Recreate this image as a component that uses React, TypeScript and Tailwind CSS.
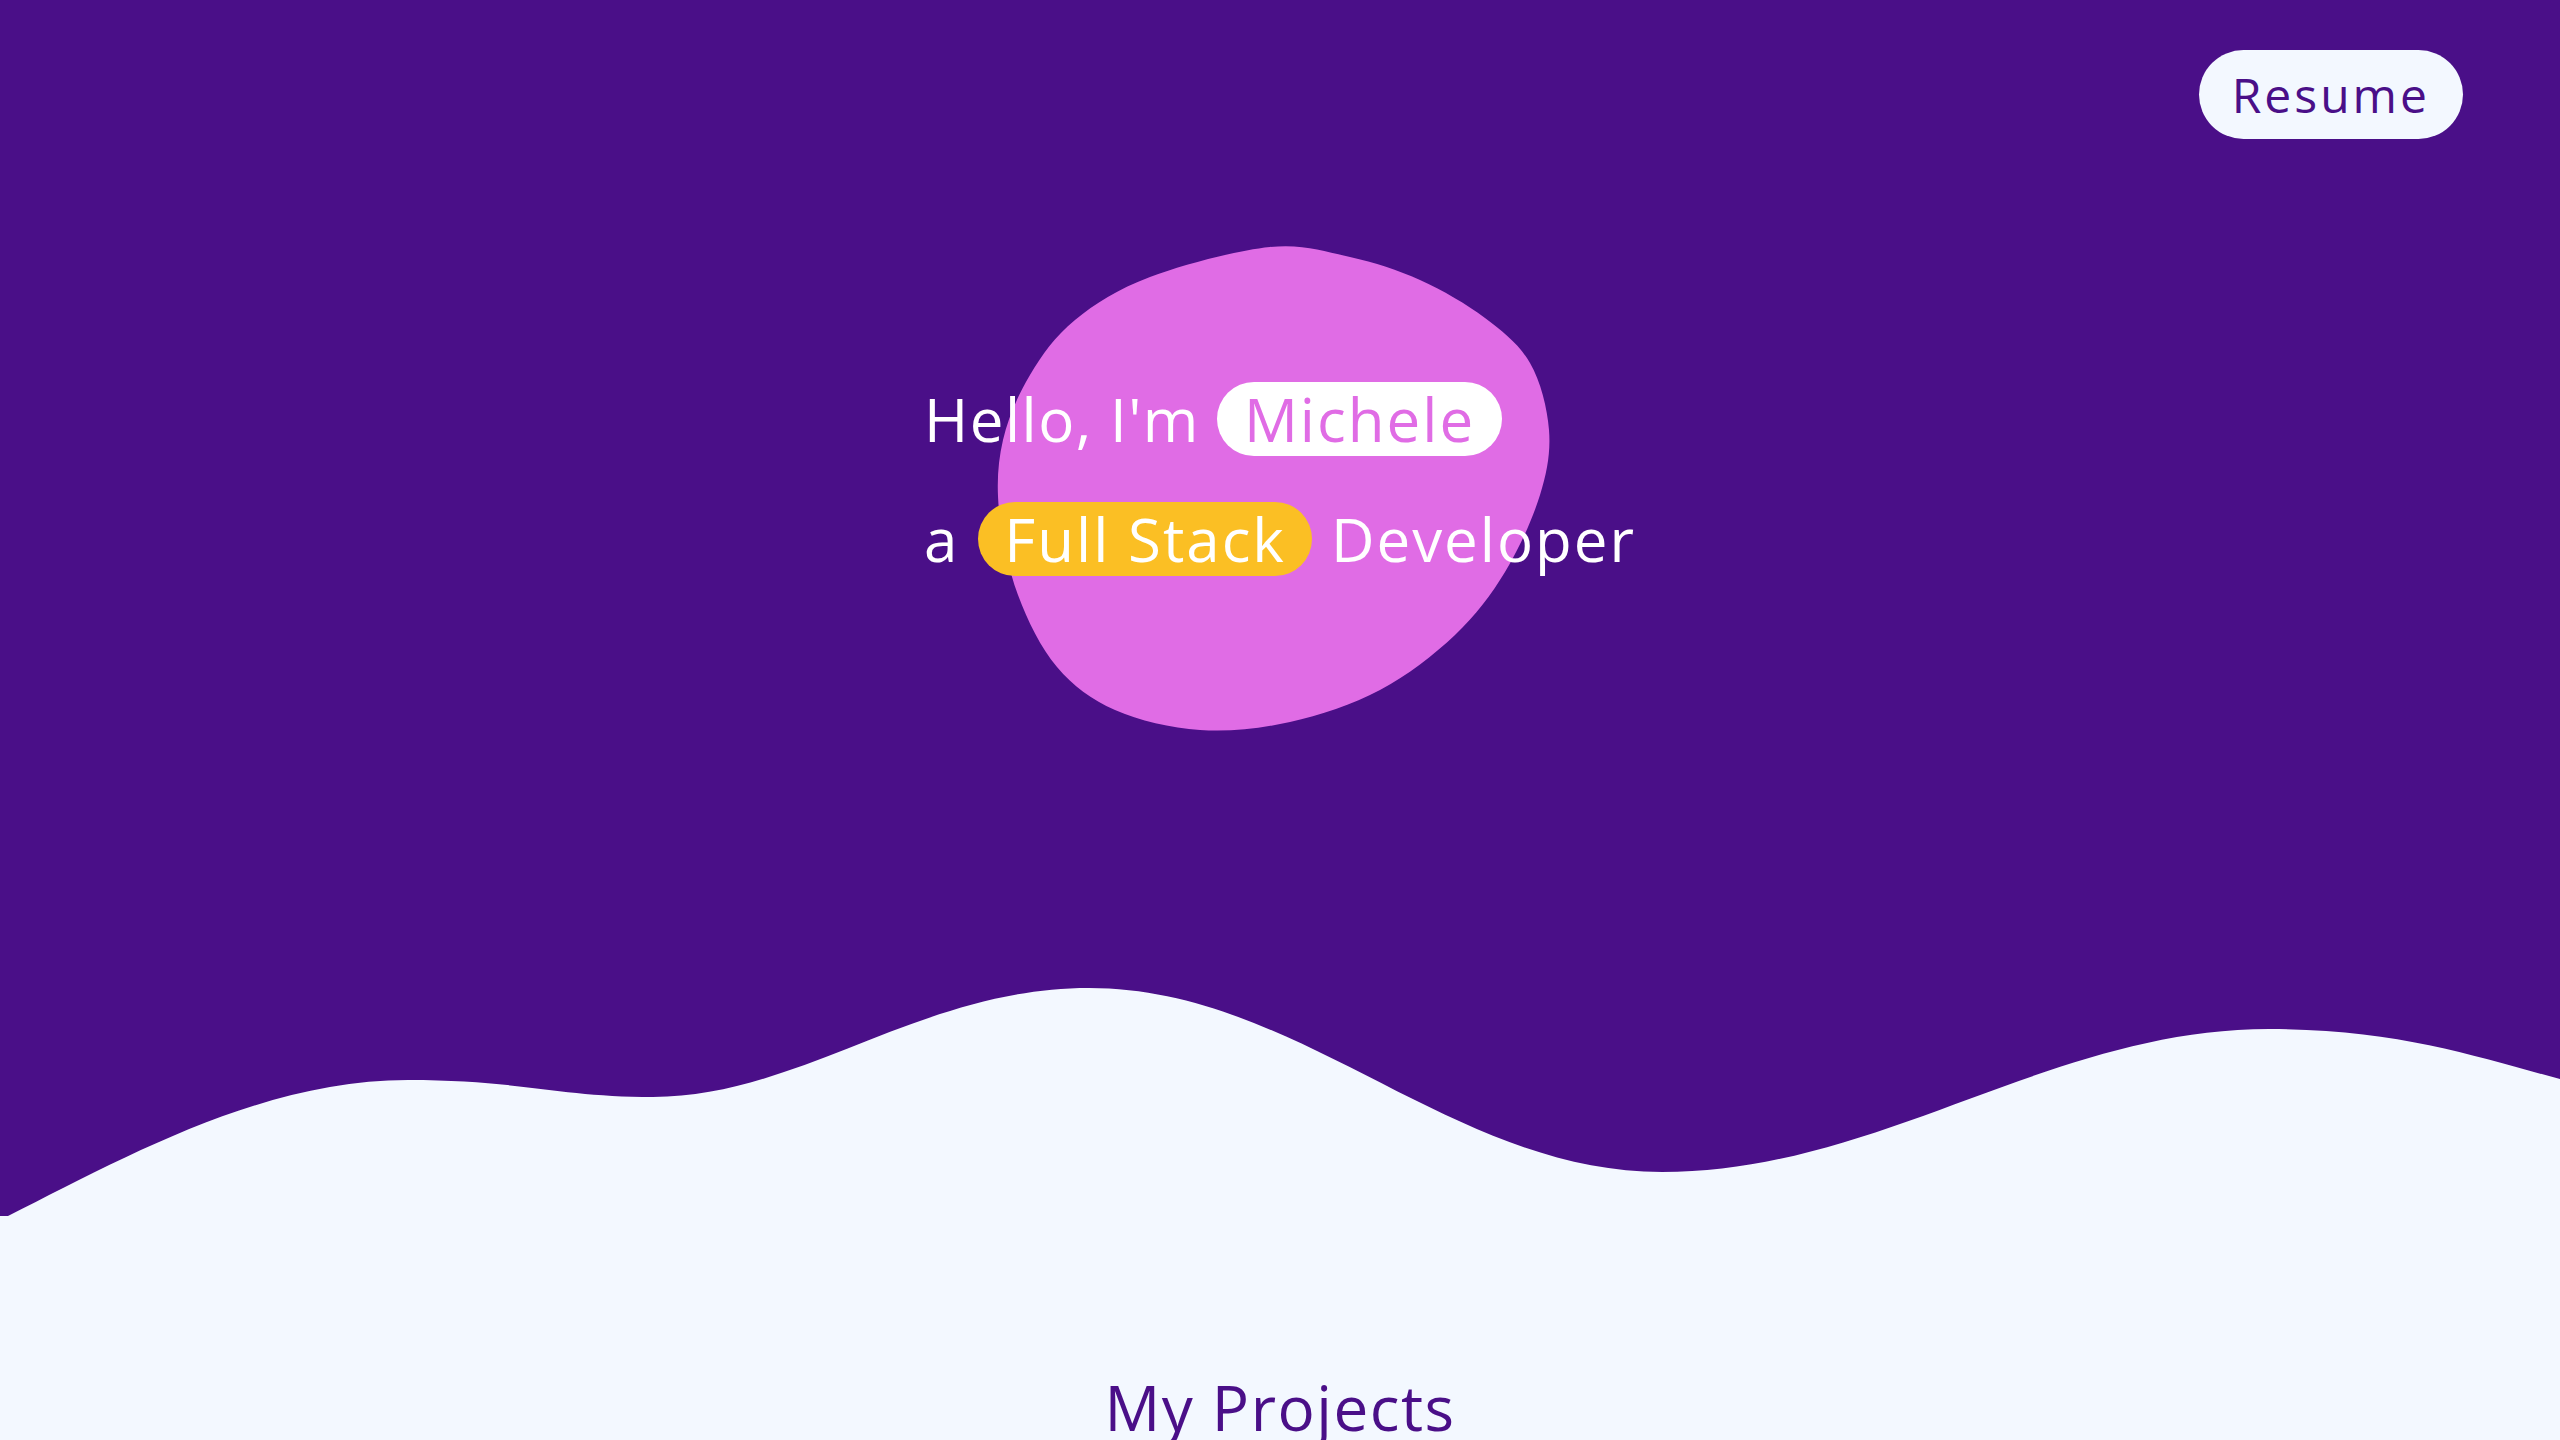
import React from "react";

const FONT = { fontFamily: '"Open Sans", "Liberation Sans", sans-serif' };

const BLOB_POINTS: [number, number][] = [
  [1270, 247], [1350, 257], [1420, 280], [1485, 318], [1530, 363], [1549, 430],
  [1540, 495], [1505, 572], [1455, 635], [1380, 690], [1290, 722], [1200, 730],
  [1115, 710], [1057, 667], [1018, 595], [999, 510], [1003, 440], [1030, 375],
  [1075, 320], [1150, 277],
];

function smoothClosed(pts: [number, number][]) {
  const n = pts.length;
  let d = `M${pts[0][0]},${pts[0][1]}`;
  for (let i = 0; i < n; i++) {
    const p0 = pts[(i - 1 + n) % n];
    const p1 = pts[i];
    const p2 = pts[(i + 1) % n];
    const p3 = pts[(i + 2) % n];
    const c1x = p1[0] + (p2[0] - p0[0]) / 6;
    const c1y = p1[1] + (p2[1] - p0[1]) / 6;
    const c2x = p2[0] - (p3[0] - p1[0]) / 6;
    const c2y = p2[1] - (p3[1] - p1[1]) / 6;
    d += ` C${c1x.toFixed(1)},${c1y.toFixed(1)} ${c2x.toFixed(1)},${c2y.toFixed(1)} ${p2[0]},${p2[1]}`;
  }
  return d + " Z";
}

function Blob() {
  return (
    <svg
      className="absolute left-[71px] top-[-138px] w-[558px] h-[490px] pointer-events-none"
      viewBox="995 244 558 490"
      aria-hidden="true"
    >
      <path fill="#e06ce5" d={smoothClosed(BLOB_POINTS)} />
    </svg>
  );
}

function Wave() {
  return (
    <svg
      className="block w-full h-[228px] bg-[#4a0f88]"
      viewBox="0 0 2560 228"
      preserveAspectRatio="none"
      aria-hidden="true"
    >
      <path
        fill="#f3f8ff"
        d="M8,228 C120,172 260,92 408,92 C520,92 560,109 653,109 C800,109 920,0 1089,0 C1300,0 1450,184 1662,184 C1880,184 2050,41 2269,41 C2400,41 2480,70 2560,91 L2560,228 L0,228 Z"
      />
    </svg>
  );
}

export default function App() {
  return (
    <div className="min-h-screen bg-[#f3f8ff]" style={FONT}>
      <header className="bg-[#4a0f88] h-[988px] flex flex-col">
        <nav className="flex justify-end pt-[50px] pr-[97px]">
          <button className="h-[89px] px-[33px] rounded-full bg-[#f3f8ff] text-[#4a0f88] text-[48px] leading-none font-normal tracking-[3px]">
            Resume
          </button>
        </nav>
        <div className="flex justify-center pt-[243px]">
          <div className="relative">
            <Blob />
            <div className="relative flex flex-col gap-[46px] text-white text-[60px] font-normal leading-none tracking-[2px]">
              <div className="flex items-center h-[74px] gap-[17px]">
                <span className="tracking-[1.5px]">Hello, I'm</span>
                <span className="h-[74px] flex items-center px-[27px] rounded-full bg-white text-[#e06ce5]">
                  Michele
                </span>
              </div>
              <div className="flex items-center h-[74px] gap-[19px]">
                <span>a</span>
                <span className="h-[74px] flex items-center px-[26px] rounded-full bg-[#fbbf24] text-white">
                  Full Stack
                </span>
                <span>Developer</span>
              </div>
            </div>
          </div>
        </div>
      </header>
      <Wave />
      <section className="bg-[#f3f8ff] pt-[160px] pb-[80px]">
        <h2 className="text-center text-[62px] leading-none font-normal tracking-[1.5px] text-[#4a0f88]">
          My Projects
        </h2>
      </section>
    </div>
  );
}
